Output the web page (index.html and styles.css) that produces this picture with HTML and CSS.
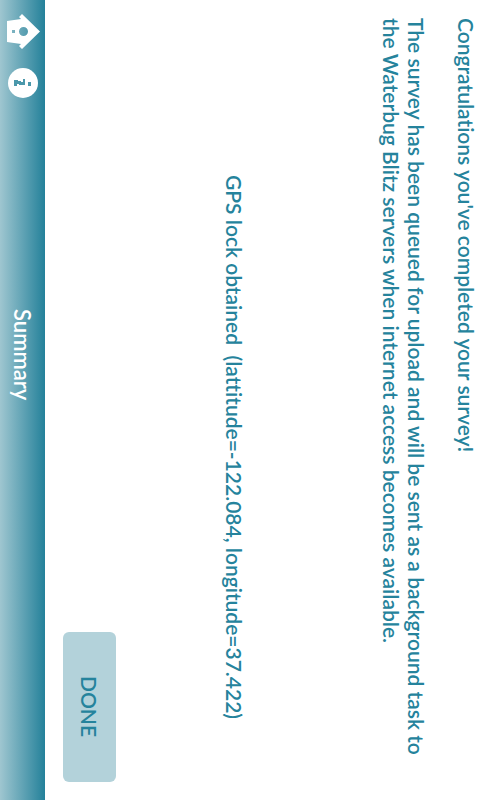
FILE: index.html
```html
<!DOCTYPE html>
<html lang="en">
<head>
<meta charset="utf-8">
<title>Summary</title>
<link rel="stylesheet" href="styles.css">
</head>
<body>
<main class="content">
  <section class="message">
    <p>Congratulations you've completed your survey!</p>
    <p>The survey has been queued for upload and will be sent as a background task to<br>the Waterbug Blitz servers when internet access becomes available.</p>
  </section>
  <p class="location">GPS lock obtained&nbsp; (lattitude=-122.084, longitude=37.422)</p>
  <button class="done" type="button">DONE</button>
</main>
<header class="bar">
  <nav class="tools">
    <a class="tool" href="#home" aria-label="Home">
      <svg width="34" height="36" viewBox="-1 0 34 36">
        <path fill="#fff" fill-rule="evenodd" d="M15 0 L33 17.500 L15 35 L12 32 L14 30 L0 28 V7 L14 5 L12 3 Z M12 17.500 a4.500 4.500 0 1 0 9 0 a4.500 4.500 0 1 0 -9 0 Z M5 16 V19 H8 V16 Z"/>
      </svg>
    </a>
    <a class="tool" href="#info" aria-label="Information">
      <svg width="30" height="30" viewBox="0 0 30 30">
        <circle cx="15" cy="15" r="15" fill="#fff"/>
        <path fill="#4b98ab" d="M20 14 H23 V18 H20 Z M6 12 H10 V13 H13 V14 H15 V11 H17 V17 H11 V16 H9 V18 H6 Z"/>
      </svg>
    </a>
  </nav>
  <h1 class="title">Summary</h1>
</header>
</body>
</html>
```
FILE: styles.css
```css
* {
  box-sizing: border-box;
}

html {
  writing-mode: vertical-rl;
  height: 100%;
}

body {
  display: flex;
  flex-direction: column;
  width: 100vw;
  height: 100vh;
  margin: 0;
  background: #fff;
  color: #25839c;
  font-family: Lato, sans-serif;
  font-size: 21px;
  font-weight: 600;
  font-variant-ligatures: none;
  line-height: 25px;
}

p,
h1 {
  margin: 0;
}

.content {
  flex: 1;
  display: flex;
  flex-direction: column;
  justify-content: space-between;
  padding: 18px 1px 18px 18px;
}

.message {
  display: flex;
  flex-direction: column;
  gap: 25px;
}

.location {
  text-align: center;
  margin-top: 94px;
  margin-right: 26px;
}

.done {
  align-self: flex-end;
  width: 53px;
  height: 150px;
  padding: 0;
  border: 0;
  border-radius: 6px;
  background: #b3d2da;
  color: inherit;
  font: inherit;
  writing-mode: vertical-rl;
}

.bar {
  display: flex;
  align-items: center;
  width: 45px;
  background: linear-gradient(to right, #9fc6d0, #24819a);
  color: #fff;
}

.tools {
  display: flex;
  align-items: center;
  gap: 18px;
  padding-top: 14px;
}

.tool {
  display: flex;
}

.title {
  flex: 1;
  padding-bottom: 188px;
  text-align: center;
  font-size: 22px;
  font-weight: 600;
}
```
